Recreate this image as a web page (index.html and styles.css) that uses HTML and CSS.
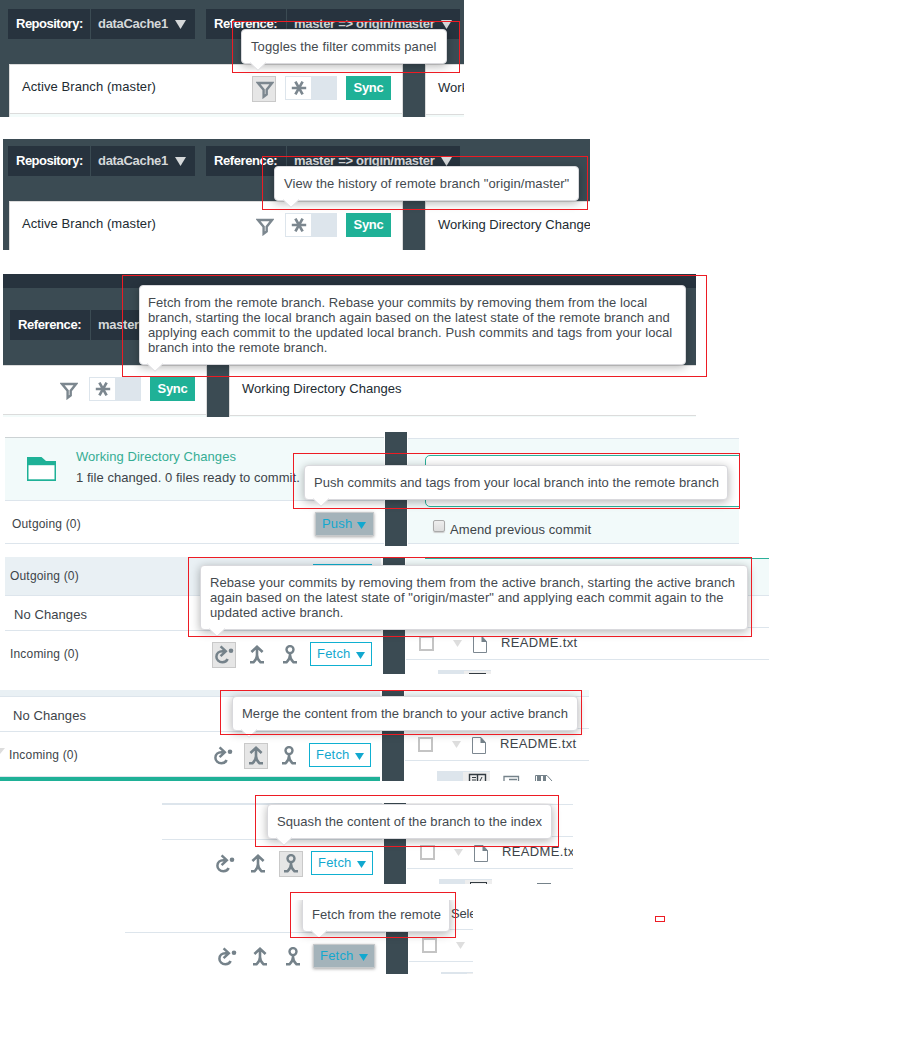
FILE: index.html
```html
<!DOCTYPE html>
<html lang="en">
<head>
<meta charset="utf-8">
<title>Git tooltips</title>
<link rel="stylesheet" href="styles.css">
</head>
<body>
<svg class="defs" width="0" height="0">
  <symbol id="funnel" viewBox="0 0 18 18"><path d="M2 2H16L10.7 8.7V13.5L7.6 15.8V8.7Z" fill="none" stroke="#7c878f" stroke-width="2.4"/></symbol>
  <symbol id="star" viewBox="0 0 16 16"><path d="M.8 8H15.2M4.4 1.6L11.600 14.4M4.400 14.4L11.6 1.6" stroke="#7c878f" stroke-width="2.7"/></symbol>
  <symbol id="rebase" viewBox="0 0 19 19"><path d="M12.6 14C11.8 16.2 9.6 17.3 7.4 17.3C4 17.300 1.4 14.8 1.4 11.700C1.4 8.300 4 6.2 7.400 6.2H10.8M5.600 1.300L10.800 6.2L5.600 11.1" fill="none" stroke="#75828a" stroke-width="2.500"/><circle cx="16" cy="5.8" r="2.3" fill="#75828a"/></symbol>
  <symbol id="merge" viewBox="0 0 14 19"><path d="M1.400 7L7 1.800L12.600 7M7 2.500V11M7 10C7 14 5.500 15.300 3.600 17.200H0M7 10C7 14 8.500 15.300 10.400 17.200H14" fill="none" stroke="#75828a" stroke-width="2.600"/></symbol>
  <symbol id="squash" viewBox="0 0 14 19"><circle cx="7" cy="4.600" r="3.500" fill="none" stroke="#75828a" stroke-width="2.400"/><path d="M7 8V11M7 10C7 14 5.500 15.300 3.600 17.200H0M7 10C7 14 8.500 15.300 10.400 17.200H14" fill="none" stroke="#75828a" stroke-width="2.600"/></symbol>
  <symbol id="caret" viewBox="0 0 12 10" preserveAspectRatio="none"><path d="M0 0H12L6 10Z" fill="currentColor"/></symbol>
  <symbol id="file" viewBox="0 0 14 17"><path d="M.5 .5H9L13.5 5.5V16.5H.5Z" fill="#fff" stroke="#7c8790"/><path d="M8.5 0V6H14Z" fill="#75828a"/></symbol>
  <symbol id="tip" viewBox="0 0 18 9"><path d="M0 0L9 8.3L18 0Z" fill="#fff"/><path d="M1 .5L9 8.3L17 .5" fill="none" stroke="#dcdce0"/></symbol>
</svg>

<div class="shot s1">
  <div class="bar">
    <div class="pick repo"><b>Repository:</b><span>dataCache1 <svg class="c12"><use href="#caret"/></svg></span></div>
    <div class="pick ref"><b>Reference:</b><span>master =&gt; origin/master <svg class="c12 near"><use href="#caret"/></svg></span></div>
  </div>
  <div class="panels">
    <div class="panel left"><div class="head"><span class="name">Active Branch (master)</span><i class="tool on"><svg class="i18"><use href="#funnel"/></svg></i><i class="toggle"><svg class="i16"><use href="#star"/></svg></i><b class="sync">Sync</b></div></div>
    <div class="panel right"><div class="head">Work</div></div>
  </div>
  <div class="tooltip">Toggles the filter commits panel<svg class="arrow"><use href="#tip"/></svg></div>
</div>

<div class="shot s2">
  <div class="bar">
    <div class="pick repo"><b>Repository:</b><span>dataCache1 <svg class="c12"><use href="#caret"/></svg></span></div>
    <div class="pick ref"><b>Reference:</b><span>master =&gt; origin/master <svg class="c12 near"><use href="#caret"/></svg></span></div>
  </div>
  <div class="panels">
    <div class="panel left"><div class="head"><span class="name">Active Branch (master)</span><i class="tool"><svg class="i18"><use href="#funnel"/></svg></i><i class="toggle"><svg class="i16"><use href="#star"/></svg></i><b class="sync">Sync</b></div></div>
    <div class="panel right"><div class="head">Working Directory Change</div></div>
  </div>
  <div class="tooltip">View the history of remote branch "origin/master"<svg class="arrow"><use href="#tip"/></svg></div>
</div>

<div class="shot s3">
  <div class="bar">
    <div class="pick ref"><b>Reference:</b><span>master</span></div>
  </div>
  <div class="panels">
    <div class="panel left"><div class="head"><span class="name"></span><i class="tool"><svg class="i18"><use href="#funnel"/></svg></i><i class="toggle"><svg class="i16"><use href="#star"/></svg></i><b class="sync">Sync</b></div></div>
    <div class="panel right"><div class="head">Working Directory Changes</div></div>
  </div>
  <div class="tooltip">Fetch from the remote branch. Rebase your commits by removing them from the local<br>branch, starting the local branch again based on the latest state of the remote branch and<br>applying each commit to the updated local branch. Push commits and tags from your local<br>branch into the remote branch.<svg class="arrow"><use href="#tip"/></svg></div>
</div>

<div class="shot s4">
  <div class="col">
    <div class="changes">
      <svg class="folder" viewBox="0 0 30 25"><path d="M1 1H15.500L20 5H30V25H1Z" fill="#1fb197"/><path d="M2.500 9.200H28.500V23.300H2.500Z" fill="#fff"/></svg>
      <div class="lines"><p class="green">Working Directory Changes</p><p>1 file changed. 0 files ready to commit.</p></div>
    </div>
    <div class="row"><span class="small">Outgoing (0)</span><span class="btn filled push">Push <svg class="c9"><use href="#caret"/></svg></span></div>
  </div>
  <div class="split"></div>
  <div class="side">
    <div class="message"></div>
    <div class="amend"><i class="box"></i>Amend previous commit</div>
  </div>
  <div class="tooltip">Push commits and tags from your local branch into the remote branch<svg class="arrow"><use href="#tip"/></svg></div>
</div>

<div class="shot s5">
  <div class="col">
    <div class="row group"><span class="small">Outgoing (0)</span><span class="btn tail"></span></div>
    <div class="row none">No Changes</div>
    <div class="row incoming"><span class="small">Incoming (0)</span><i class="act on"><svg class="i19"><use href="#rebase"/></svg></i><i class="act"><svg class="i14"><use href="#merge"/></svg></i><i class="act"><svg class="i14"><use href="#squash"/></svg></i><span class="btn">Fetch <svg class="c9"><use href="#caret"/></svg></span></div>
  </div>
  <div class="split"></div>
  <div class="side">
    <div class="top"></div><div class="gap"></div>
    <div class="item"><i class="check"></i><svg class="c9"><use href="#caret"/></svg><svg class="file"><use href="#file"/></svg><span>README.txt</span></div>
    <div class="foot"><i class="seg"><i></i></i></div>
  </div>
  <div class="tooltip">Rebase your commits by removing them from the active branch, starting the active branch<br>again based on the latest state of "origin/master" and applying each commit again to the<br>updated active branch.<svg class="arrow"><use href="#tip"/></svg></div>
</div>

<div class="shot s6">
  <div class="col">
    <div class="row group"></div>
    <div class="row none">No Changes</div>
    <div class="row incoming"><i class="notch"></i><span class="small">Incoming (0)</span><i class="act"><svg class="i19"><use href="#rebase"/></svg></i><i class="act on"><svg class="i14"><use href="#merge"/></svg></i><i class="act"><svg class="i14"><use href="#squash"/></svg></i><span class="btn">Fetch <svg class="c9"><use href="#caret"/></svg></span></div>
    <div class="rule"></div>
  </div>
  <div class="split"></div>
  <div class="side">
    <div class="top"></div><div class="gap"></div>
    <div class="item"><i class="check"></i><svg class="c9"><use href="#caret"/></svg><svg class="file"><use href="#file"/></svg><span>README.txt</span></div>
    <div class="foot"><i class="seg"></i>
      <svg class="footicons" viewBox="0 0 90 10" width="90" height="10"><g fill="none"><path d="M.5 10V3.5H16.5V10M8.5 3V10" stroke="#333b41" stroke-width="1.4"/><path d="M3 6.500H7M3 9H7M11 10L13 6" stroke="#333b41"/><path d="M35 10V5.500H49.500V10M40 8.500H48" stroke="#75828a" stroke-width="1.300"/><path d="M66.500 10V4.500H78L83 10" stroke="#75828a"/></g><path d="M68 4H72V10H68ZM74 4H77V10H74Z" fill="#75828a"/></svg>
    </div>
  </div>
  <div class="tooltip">Merge the content from the branch to your active branch<svg class="arrow"><use href="#tip"/></svg></div>
</div>

<div class="shot s7">
  <div class="col">
    <div class="row group"></div>
    <div class="row none"></div>
    <div class="row incoming"><i class="act"><svg class="i19"><use href="#rebase"/></svg></i><i class="act"><svg class="i14"><use href="#merge"/></svg></i><i class="act on"><svg class="i14"><use href="#squash"/></svg></i><span class="btn">Fetch <svg class="c9"><use href="#caret"/></svg></span></div>
  </div>
  <div class="split"></div>
  <div class="side">
    <div class="top"></div><div class="gap"></div>
    <div class="item"><i class="check"></i><svg class="c9"><use href="#caret"/></svg><svg class="file"><use href="#file"/></svg><span>README.tx</span></div>
    <div class="foot"><i class="seg"><i></i></i><i class="dash"></i></div>
  </div>
  <div class="tooltip">Squash the content of the branch to the index<svg class="arrow"><use href="#tip"/></svg></div>
</div>

<div class="shot s8">
  <div class="col">
    <div class="row none"></div>
    <div class="row incoming"><i class="act"><svg class="i19"><use href="#rebase"/></svg></i><i class="act"><svg class="i14"><use href="#merge"/></svg></i><i class="act"><svg class="i14"><use href="#squash"/></svg></i><span class="btn filled">Fetch <svg class="c9"><use href="#caret"/></svg></span></div>
  </div>
  <div class="split"></div>
  <div class="side">
    <div class="gap">Sele</div>
    <div class="item"><i class="check"></i><svg class="c9"><use href="#caret"/></svg></div>
    <div class="foot"><i class="seg"></i></div>
  </div>
  <div class="tooltip">Fetch from the remote<svg class="arrow"><use href="#tip"/></svg></div>
</div>

<div class="mark m1"></div><div class="mark m2"></div><div class="mark m3"></div><div class="mark m4"></div>
<div class="mark m5"></div><div class="mark m6"></div><div class="mark m7"></div><div class="mark m8"></div><div class="mark m9"></div>
</body>
</html>
```
FILE: styles.css
```css
* { box-sizing: border-box; }
body { margin: 0; position: relative; width: 912px; height: 1059px; overflow: hidden; background: #fff; font: 13px/15px "Liberation Sans", Arial, sans-serif; letter-spacing: .08px; color: #3d4449; }
svg { flex: none; overflow: visible; }
.defs { position: absolute; }
i { font-style: normal; flex: none; }
p { margin: 0; }
.shot { position: relative; overflow: hidden; display: flex; }
.s1, .s2, .s3 { flex-direction: column; background: #3b4b53; color: #222b31; }
.s1 { width: 464px; height: 117px; }
.s2 { width: 587px; height: 111px; margin: 22px 0 0 3px; }
.s3 { width: 693px; height: 143px; margin: 24px 0 0 3px; }
.s4 { width: 734px; height: 114px; margin: 15px 0 0 5px; }
.s5 { width: 764px; height: 117px; margin: 11px 0 0 5px; }
.s6 { width: 589px; height: 91px; margin: 16px 0 0 0; }
.s7 { width: 411px; height: 81px; margin: 22px 0 0 162px; }
.s8 { width: 348px; height: 74px; margin: 16px 0 0 125px; }

/* header bar */
.bar { display: flex; gap: 11px; flex: none; height: 64px; padding: 9px 0 0 8px; }
.s2 .bar { height: 62px; padding: 7px 0 0 5px; }
.s3 .bar { height: 91px; padding: 22px 0 0 7px; border-top: 14px solid #27333e; }
.pick { display: flex; height: 30px; background: #27333e; font-weight: bold; line-height: 30px; color: #d5d8da; letter-spacing: -.3px; white-space: nowrap; }
.pick b { width: 83px; padding-left: 8px; border-right: 1px solid #3b4b53; color: #fff; letter-spacing: -.5px; }
.pick.ref b { width: 81px; letter-spacing: -.4px; }
.pick span { display: flex; align-items: center; padding-left: 7px; }
.repo { width: 187px; }
.ref { width: 254px; }
.c12 { width: 11px; height: 9px; margin-left: 7px; }
.c12.near { margin-left: 6px; }

/* branch / working directory panels */
.panels { display: flex; gap: 22px; flex: 1; padding-left: 9px; }
.s2 .panels { padding-left: 6px; }
.s3 .panels { padding-left: 0; }
.panel { background: #f3fbfa; border: 1px solid #dcdcdc; border-bottom: 0; flex: none; }
.left { width: 394px; }
.s3 .left { width: 204px; border-left: 0; }
.panel.right { flex: 1; border-right: 0; min-width: 0; }
.head { height: 49px; display: flex; background: #fff; border-bottom: 1px solid #dcdcdc; padding: 11px 11px 0 12px; white-space: nowrap; }
.right .head { height: 50px; padding: 15px 0 0 12px; letter-spacing: .03px; }
.name { flex: 1; padding-top: 3px; }
.tool { width: 24px; height: 26px; display: flex; padding: 5px 0 0 4px; margin-right: 9px; }
.tool.on, .act.on { background: #e6e6e6; border: 1px solid #c9c9c9; }
.tool.on { padding: 4px 0 0 3px; }
.i18 { width: 18px; height: 18px; }
.i16 { width: 16px; height: 16px; }
.i19 { width: 19px; height: 19px; }
.i14 { width: 14px; height: 19px; }
.toggle { width: 52px; height: 24px; border: 1px solid #dde5ec; padding: 3px 0 0 5px; background: linear-gradient(90deg, #fff 25px, #dde5ec 25px); margin-right: 9px; }
.sync { width: 45px; height: 24px; background: #1fb197; color: #fff; line-height: 24px; text-align: center; letter-spacing: -.3px; }

/* tooltips */
.tooltip { position: absolute; background: #fff; border: 1px solid #d9d9dd; border-radius: 4px; box-shadow: 0 2px 10px rgba(0,0,0,.3); padding: 9px; white-space: nowrap; color: #444a4f; }
.arrow { position: absolute; left: 7px; top: calc(100% - 1px); width: 18px; height: 9px; }
.s1 .tooltip { left: 241px; top: 29px; width: 206px; height: 35px; letter-spacing: .11px; }
.s2 .tooltip { left: 271px; top: 27px; width: 305px; height: 35px; }
.s3 .tooltip { left: 136px; top: 11px; width: 547px; height: 80px; padding: 9px 8px; }
.s3 .arrow { left: 6px; }
.s4 .tooltip { left: 299px; top: 33px; width: 424px; height: 35px; letter-spacing: .06px; }
.s5 .tooltip { left: 195px; top: 8px; width: 548px; height: 65px; letter-spacing: .09px; }
.s6 .tooltip { left: 232px; top: 6px; width: 346px; height: 35px; letter-spacing: .04px; }
.s7 .tooltip { left: 105px; top: 1px; width: 285px; height: 35px; letter-spacing: .06px; }
.s8 .tooltip { left: 177px; top: -4px; width: 148px; height: 36px; padding-top: 10px; letter-spacing: .05px; }

/* commit list */
.col { width: 378px; margin-right: 2px; flex: none; }
.split { width: 22px; background: #3b4b53; flex: none; }
.side { flex: 1; min-width: 0; margin-left: 1px; }
.row { display: flex; border-bottom: 1px solid #dde5ec; position: relative; }
.small { font-size: 12px; flex: 1; letter-spacing: .18px; }
.s4 .col { width: 379px; margin-right: 1px; padding-top: 5px; }
.changes { height: 64px; display: flex; background: #f2fafa; border: solid #ccd2d4; border-width: 1px 0 0; border-bottom: 1px solid #dde5ec; padding: 11px 0 0 21px; }
.folder { width: 30px; height: 25px; margin: 7px 20px 0 0; }
.lines { line-height: 21px; white-space: nowrap; margin-top: -3px; letter-spacing: .05px; }
.green { color: #36ad94; }
.s4 .row { height: 43px; padding: 11px 10px 0 7px; }
.s4 .small { padding-top: 5px; }
.btn { width: 62px; height: 24px; border: 1px solid #0fb0d1; color: #12a8cf; padding-left: 6px; line-height: 22px; white-space: nowrap; display: flex; align-items: center; gap: 5px; letter-spacing: .2px; }
.c9 { width: 9px; height: 7px; margin-top: 3px; }
.filled { background: #a4b3ba; border-color: #c6c9cb; box-shadow: 0 1px 3px rgba(0,0,0,.35); }
.push { width: 59px; }
.s4 .side { margin-top: 6px; height: 106px; background: #f2fafa; border: solid #dde5ec; border-width: 1px 0; }
.message { height: 52px; margin: 16px -5px 0 17px; border: 1px solid #2bb09a; border-radius: 5px; background: #fff; }
.amend { display: flex; padding: 13px 0 0 25px; line-height: 19px; }
.box { width: 12px; height: 12px; border: 1px solid #aaa; border-radius: 2px; background: linear-gradient(#eee, #ddd); margin-right: 5px; box-shadow: 0 1px 1px #ccc; }

.s5 .col { width: 376px; }
.s5 .group { height: 39px; background: #e9f0f4; padding: 12px 0 0 5px; }
.tail { width: 59px; margin: -5px 9px 0 0; border-width: 2px; }
.s5 .none { height: 35px; padding: 11px 9px 0; }
.incoming { height: 46px; padding: 11px 7px 0 5px; gap: 9px; }
.s5 .incoming, .s7 .incoming, .s8 .incoming { border: 0; }
.incoming .small { padding-top: 5px; }
.act { width: 24px; height: 26px; display: flex; justify-content: center; padding-top: 3px; }
.act.on { padding-top: 2px; }
.incoming .btn { margin-left: -1px; margin-right: 2px; }
.s5 .split { margin-top: 1px; }
.s5 .top { height: 39px; background: linear-gradient(#2bb09a, #2bb09a) 19px 1px / 100% 1px no-repeat, linear-gradient(#f2fafa, #f2fafa) 0 1px no-repeat; border-bottom: 1px solid #dde5ec; }
.side .gap { height: 32px; border-bottom: 1px solid #dde5ec; }
.item { height: 32px; border-bottom: 1px solid #dde5ec; display: flex; padding: 8px 0 0 13px; }
.check { width: 15px; height: 15px; border: 2px solid #c4c4c4; margin-right: 19px; background: #fff; }
.item .c9 { margin-top: 4px; margin-right: 11px; color: #dedede; }
.file { width: 14px; height: 17px; margin-right: 14px; }
.item span { margin-top: -1px; letter-spacing: .35px; }
.foot { padding: 10px 0 0 32px; display: flex; }
.seg { width: 53px; height: 24px; background: linear-gradient(90deg, #dde5ec 26px, #eee 26px); border-top: 1px solid #dde5ec; position: relative; }
.seg i { display: block; width: 17px; height: 10px; border: 1px solid #333b41; margin: 2px 0 0 31px; }
.dash { width: 14px; height: 1px; background: #75828a; margin: 4px 0 0 45px; }

.s6 .col { width: 380px; }
.s6 .group { height: 7px; background: #e9f0f4; }
.s6 .none { height: 35px; padding: 11px 13px 0; }
.s6 .incoming { height: 45px; padding: 11px 7px 0 9px; }
.notch { position: absolute; left: 0; top: 16px; border-top: 6px solid #ddd; border-right: 5px solid transparent; }
.rule { height: 4px; background: #1fb197; }
.s6 .top { height: 7px; border-bottom: 1px solid #dde5ec; background: #f2fafa; }
.footicons { position: absolute; left: 469px; top: 81px; }

.s7 .col { width: 220px; }
.s7 .group { height: 2px; border-bottom-width: 2px; }
.s7 .none { height: 35px; }
.s7 .incoming, .s8 .incoming { justify-content: flex-end; }
.s7 .top { height: 2px; border-bottom: 1px solid #dde5ec; }

.s8 .col { width: 260px; margin-right: 1px; }
.s8 .row.none { height: 33px; }
.s8 .split { margin-top: 32px; }
.s8 .side .gap { height: 30px; padding: 6px 0 0 42px; white-space: nowrap; letter-spacing: -.2px; }
.s8 .incoming { padding-right: 8px; }

/* callout frames */
.mark { position: absolute; border: 1px solid #ed1c24; }
.m1 { left: 232px; top: 21px; width: 228px; height: 52px; }
.m2 { left: 262px; top: 156px; width: 326px; height: 54px; }
.m3 { left: 122px; top: 275px; width: 585px; height: 102px; }
.m4 { left: 293px; top: 453px; width: 447px; height: 56px; }
.m5 { left: 188px; top: 557px; width: 564px; height: 80px; }
.m6 { left: 220px; top: 690px; width: 362px; height: 45px; }
.m7 { left: 255px; top: 795px; width: 304px; height: 52px; }
.m8 { left: 290px; top: 892px; width: 166px; height: 46px; }
.m9 { left: 655px; top: 916px; width: 10px; height: 6px; }
```
